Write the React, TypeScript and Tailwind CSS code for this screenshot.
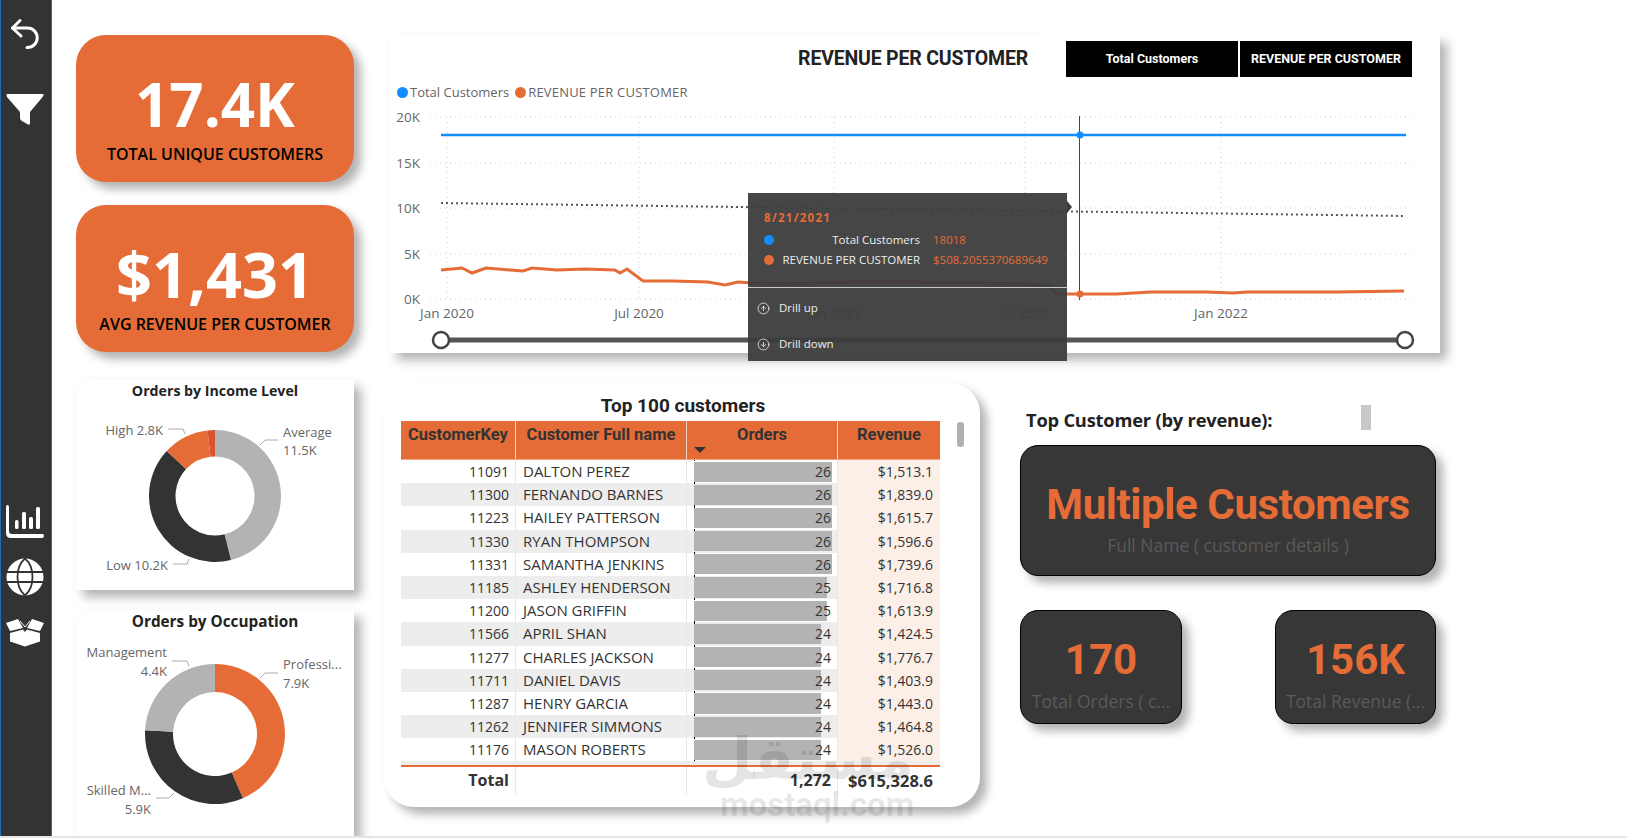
import React from "react";
import { CircleArrowDown, CircleArrowUp } from "lucide-react";

const ORANGE = "#E66C37";
const DARK = "#333333";
const GREY = "#B3B3B3";

const customers = [
  { key: 11091, name: "DALTON PEREZ", orders: 26, revenue: "$1,513.1" },
  { key: 11300, name: "FERNANDO BARNES", orders: 26, revenue: "$1,839.0" },
  { key: 11223, name: "HAILEY PATTERSON", orders: 26, revenue: "$1,615.7" },
  { key: 11330, name: "RYAN THOMPSON", orders: 26, revenue: "$1,596.6" },
  { key: 11331, name: "SAMANTHA JENKINS", orders: 26, revenue: "$1,739.6" },
  { key: 11185, name: "ASHLEY HENDERSON", orders: 25, revenue: "$1,716.8" },
  { key: 11200, name: "JASON GRIFFIN", orders: 25, revenue: "$1,613.9" },
  { key: 11566, name: "APRIL SHAN", orders: 24, revenue: "$1,424.5" },
  { key: 11277, name: "CHARLES JACKSON", orders: 24, revenue: "$1,776.7" },
  { key: 11711, name: "DANIEL DAVIS", orders: 24, revenue: "$1,403.9" },
  { key: 11287, name: "HENRY GARCIA", orders: 24, revenue: "$1,443.0" },
  { key: 11262, name: "JENNIFER SIMMONS", orders: 24, revenue: "$1,464.8" },
  { key: 11176, name: "MASON ROBERTS", orders: 24, revenue: "$1,526.0" },
];

// revenue line, in page pixels (the chart svg uses a matching viewBox)
const revenueLine =
  "441,270 462,268 472,273 486,268 510,270 523,271 532,268 557,270 585,269 615,270 620,273 627,269 643,281 673,281 708,282 725,285 738,282 752,283 790,284 850,282 912,282 980,283 1049,285 1056,294 1080,294 1117,294 1151,292 1206,292 1233,293 1247,292 1336,292 1404,291";

const arc = (cx: number, cy: number, r: number, ri: number, from: number, to: number) => {
  const pt = (rad: number, deg: number) => {
    const a = ((deg - 90) * Math.PI) / 180;
    return `${(cx + rad * Math.cos(a)).toFixed(2)} ${(cy + rad * Math.sin(a)).toFixed(2)}`;
  };
  const large = to - from > 180 ? 1 : 0;
  return `M${pt(r, from)} A${r} ${r} 0 ${large} 1 ${pt(r, to)} L${pt(ri, to)} A${ri} ${ri} 0 ${large} 0 ${pt(ri, from)} Z`;
};

const Sidebar = () => (
  <aside className="w-[52px] h-[836px] shrink-0 bg-[#333333] border-x border-[#1f6fb5] flex flex-col items-center pr-[3px]">
    <svg className="mt-[18px]" width="30" height="32" viewBox="0 0 30 32" fill="none" stroke="#fff" strokeWidth="3" strokeLinecap="round" strokeLinejoin="round">
      <path d="M10 2.500 2.500 10 11 18" />
      <path d="M2.500 10H17.500a9.500 9.500 0 0 1 0 19.500H17" />
    </svg>
    <svg className="mt-[43px]" width="38" height="33" viewBox="0 0 38 33" fill="#fff">
      <path d="M1 1H36.500Q38.500 1 37 3.500L24 19V30Q24 32.500 22 31.500L16 28Q14 27 14 25V19L1 4Q0 2 1 1Z" />
    </svg>
    <svg className="mt-[379px]" width="38" height="34" viewBox="0 0 38 34" fill="#fff">
      <path d="M0 2Q0 0 1.500 0 3 0 3 2V26Q3 29 6 29H36.500Q38 29 38 31 38 33 36 33H5Q0 33 0 28Z" />
      <rect x="9" y="15" width="3.500" height="9" rx="1.500" />
      <rect x="16" y="7" width="4" height="17" rx="1.500" />
      <rect x="23" y="12" width="4" height="12" rx="1.500" />
      <rect x="30" y="2" width="4" height="22" rx="1.500" />
    </svg>
    <svg className="mt-[19px]" width="38" height="38" viewBox="0 0 38 38">
      <circle cx="19" cy="19" r="18.500" fill="#fff" />
      <path d="M0 14h38M0 24h38M19 .5C9 9 9 29 19 37.500M19 .5C29 9 29 29 19 37.500" fill="none" stroke="#333" strokeWidth="1.800" />
    </svg>
    <svg className="mt-[22px]" width="38" height="29" viewBox="0 0 38 29" fill="#fff">
      <path d="M0 5 12 1 17 10 4 13Z" />
      <path d="M38 5 26 1 21 10 34 13Z" />
      <path d="M4 15 17 11.500 19 14 21 11.500 34 15V23.500L19 28.500 4 23.500Z" />
      <path d="M14 3 19 9 24 3" fill="none" stroke="#fff" strokeWidth="1" />
    </svg>
  </aside>
);

const KpiCard = ({ value, label, size }: { value: string; label: string; size: string }) => (
  <div className="h-[147px] rounded-[30px] bg-[#E66C37] shadow-[7px_7px_10px_rgba(0,0,0,0.3)] flex flex-col items-center pt-[29px]">
    <div className={`${size} leading-[80px] font-bold text-white`}>{value}</div>
    <div className="text-[16px] leading-[22px] font-semibold text-black -mt-[1px]">{label}</div>
  </div>
);

const Leader = ({ d }: { d: string }) => <path d={d} fill="none" stroke="#aaa" strokeWidth="1" />;

const IncomeDonut = () => (
  <div className="h-[210px] bg-white shadow-[7px_7px_10px_rgba(0,0,0,0.3)]">
    <div className="h-[22px] text-center text-[14.200px] leading-[22px] font-bold text-[#222]">Orders by Income Level</div>
    <svg className="block" width="278" height="188" viewBox="76 402 278 188">
      <path d={arc(215, 496, 66, 39.5, 0, 166)} fill={GREY} />
      <path d={arc(215, 496, 66, 39.5, 166, 313)} fill={DARK} />
      <path d={arc(215, 496, 66, 39.5, 313, 353.5)} fill={ORANGE} />
      <path d={arc(215, 496, 66, 39.5, 353.5, 360)} fill="#D9532F" />
      <Leader d="M168 429h15l2 5" />
      <Leader d="M260 445l5-5h13" />
      <Leader d="M173 564h14l2-5" />
      <g className="text-[13px] fill-[#666]">
        <text x="163" y="435" textAnchor="end">High 2.8K</text>
        <text x="283" y="437">Average</text>
        <text x="283" y="455">11.5K</text>
        <text x="168" y="570" textAnchor="end">Low 10.2K</text>
      </g>
    </svg>
  </div>
);

const OccupationDonut = () => (
  <div className="h-[226px] mt-[20px] bg-white shadow-[7px_7px_10px_rgba(0,0,0,0.3)]">
    <div className="h-[22px] text-center text-[15.300px] leading-[22px] font-bold text-[#222]">Orders by Occupation</div>
    <svg className="block" width="278" height="204" viewBox="76 632 278 204">
      <path d={arc(215, 734, 70, 42, 0, 156.5)} fill={ORANGE} />
      <path d={arc(215, 734, 70, 42, 156.5, 273)} fill={DARK} />
      <path d={arc(215, 734, 70, 42, 273, 360)} fill={GREY} />
      <Leader d="M172 661h15l2 5" />
      <Leader d="M260 678l5-5h13" />
      <Leader d="M156 798h13l5-5" />
      <g className="text-[13px] fill-[#666]">
        <text x="167" y="657" textAnchor="end">Management</text>
        <text x="167" y="676" textAnchor="end">4.4K</text>
        <text x="283" y="669">Professi...</text>
        <text x="283" y="688">7.9K</text>
        <text x="151" y="795" textAnchor="end">Skilled M...</text>
        <text x="151" y="814" textAnchor="end">5.9K</text>
      </g>
    </svg>
  </div>
);

const RevenueChart = () => (
  <div className="relative ml-[6px] w-[1050px] h-[318px] bg-white shadow-[7px_7px_10px_rgba(0,0,0,0.3)]">
    {/* white strip that cuts across the card top, behind the buttons */}
    <div className="absolute left-[646px] right-0 -top-[2px] h-[4px] bg-white" />
    <div className="relative flex justify-end items-start pt-[6px] pr-[28px]">
      <div className="mr-[38px] mt-[6px] text-[19.500px] leading-[24px] font-bold font-['Roboto',sans-serif] text-[#222] tracking-[-0.2px]">
        REVENUE PER CUSTOMER
      </div>
      <div className="flex gap-[2px]">
        <div className="w-[172px] h-[36px] bg-black text-white text-[12.500px] font-bold font-['Roboto',sans-serif] flex items-center justify-center">Total Customers</div>
        <div className="w-[172px] h-[36px] bg-black text-white text-[12.500px] font-bold font-['Roboto',sans-serif] flex items-center justify-center">REVENUE PER CUSTOMER</div>
      </div>
    </div>
    <div className="h-[16px] mt-[7px] pl-[7px] flex items-center text-[13px] leading-[15px] text-[#666]">
      <span className="w-[11px] h-[11px] rounded-full bg-[#118DFF] mr-[2px]" />
      <span>Total Customers</span>
      <span className="w-[11px] h-[11px] rounded-full bg-[#E66C37] ml-[6px] mr-[2px]" />
      <span className="tracking-[0.2px]">REVENUE PER CUSTOMER</span>
    </div>
    <svg className="block" width="1050" height="253" viewBox="390 100 1050 253">
      <g stroke="#cfcfcf" strokeWidth="1" strokeDasharray="1 4">
        {[117, 163, 208, 254, 299].map((y) => (
          <line key={y} x1="430" x2="1415" y1={y} y2={y} />
        ))}
        {[447, 639, 834, 1025, 1221].map((x) => (
          <line key={x} x1={x} x2={x} y1="117" y2="299" />
        ))}
      </g>
      <g className="text-[13.500px] fill-[#666]" textAnchor="end">
        <text x="420" y="122">20K</text>
        <text x="420" y="168">15K</text>
        <text x="420" y="213">10K</text>
        <text x="420" y="259">5K</text>
        <text x="420" y="304">0K</text>
      </g>
      <g className="text-[13.500px] fill-[#666]" textAnchor="middle">
        <text x="447" y="318">Jan 2020</text>
        <text x="639" y="318">Jul 2020</text>
        <text x="834" y="318">Jan 2021</text>
        <text x="1025" y="318">Jul 2021</text>
        <text x="1221" y="318">Jan 2022</text>
      </g>
      <line x1="441" x2="1406" y1="135" y2="135" stroke="#118DFF" strokeWidth="2.500" />
      <line x1="441" x2="1406" y1="203" y2="216" stroke="#555" strokeWidth="2" strokeDasharray="2 3" />
      <polyline points={revenueLine} fill="none" stroke={ORANGE} strokeWidth="3" />
      <line x1="1079.500" x2="1079.500" y1="116" y2="300" stroke="#444" strokeWidth="1" />
      <circle cx="1080" cy="135" r="3.500" fill="#118DFF" />
      <circle cx="1080" cy="294" r="3.500" fill={ORANGE} />
      <line x1="441" x2="1405" y1="340" y2="340" stroke="#555" strokeWidth="5" />
      <circle cx="441" cy="340" r="8" fill="#fff" stroke="#444" strokeWidth="2.500" />
      <circle cx="1405" cy="340" r="8" fill="#fff" stroke="#444" strokeWidth="2.500" />
    </svg>

    {/* hover tooltip */}
    <div className="absolute left-[358px] top-[158px] w-[319px] h-[168px] bg-[#3C3C3C]/95 text-[11.500px] text-[#eee]">
      <div className="absolute -right-[5px] top-[8px] w-0 h-0 border-y-[6px] border-y-transparent border-l-[5px] border-l-[#3C3C3C]" />
      <div className="h-[95px] border-b border-[#c8c8c8] pl-[16px] pt-[17px]">
        <div className="h-[16px] leading-[16px] font-bold text-[#E66C37] tracking-[1.300px]">8/21/2021</div>
        <div className="mt-[4px] flex items-center h-[20px]">
          <span className="w-[10px] h-[10px] rounded-full bg-[#118DFF]" />
          <span className="w-[146px] text-right">Total Customers</span>
          <span className="ml-[13px] text-[#E66C37]">18018</span>
        </div>
        <div className="flex items-center h-[20px]">
          <span className="w-[10px] h-[10px] rounded-full bg-[#E66C37]" />
          <span className="w-[146px] text-right whitespace-nowrap">REVENUE PER CUSTOMER</span>
          <span className="ml-[13px] text-[#E66C37]">$508.2055370689649</span>
        </div>
      </div>
      <div className="mt-[11px] h-[18px] pl-[9px] flex items-center gap-[9px]">
        <CircleArrowUp size={13} strokeWidth={1.5} />
        <span>Drill up</span>
      </div>
      <div className="mt-[18px] h-[18px] pl-[9px] flex items-center gap-[9px]">
        <CircleArrowDown size={13} strokeWidth={1.5} />
        <span>Drill down</span>
      </div>
    </div>
  </div>
);

const CustomerTable = () => (
  <div className="relative w-[596px] h-[424px] rounded-[30px] bg-white shadow-[7px_7px_10px_rgba(0,0,0,0.3)] pl-[17px]">
    <div className="absolute left-[573px] top-[39px] w-[7px] h-[25px] rounded-[3px] bg-[#b0b0b0]" />
    <div className="w-[539px] h-[38px] pl-[25px] text-center text-[19px] leading-[46px] font-bold font-['Roboto',sans-serif] text-[#222]">
      Top 100 customers
    </div>
    <div className="w-[539px] h-[39px] grid grid-cols-[115px_171px_151px_102px] bg-[#E66C37] border-b border-[#f2a781] text-[16.500px] font-bold font-['Roboto',sans-serif] text-[#333] text-center leading-[27px]">
      <div className="border-r border-[#f3d3c3]">CustomerKey</div>
      <div className="border-r border-[#f3d3c3] whitespace-nowrap">Customer Full name</div>
      <div className="relative border-r border-[#f3d3c3]">
        Orders
        <span className="absolute left-[7px] top-[26px] w-0 h-0 border-x-[6px] border-x-transparent border-t-[6px] border-t-[#333]" />
      </div>
      <div>Revenue</div>
    </div>
    {customers.map((c, i) => (
      <div
        key={c.key}
        className={`w-[539px] h-[23.200px] grid grid-cols-[115px_171px_151px_102px] text-[14px] leading-[23px] text-[#333] ${
          i % 2 === 0 ? "bg-white" : "bg-[#ededed]"
        }`}
      >
        <div className="text-right pr-[6px] border-r border-[#e8e8e8]">{c.key}</div>
        <div className="pl-[7px] text-[15px] border-r border-[#e8e8e8] whitespace-nowrap">{c.name}</div>
        <div className="relative pr-[6px] text-right border-r border-[#e8e8e8]">
          <div className="absolute left-[7px] top-0 bottom-0 border-l border-dotted border-black" />
          <div className="absolute left-[7px] top-[1.500px] bottom-[1.500px] bg-[#b3b3b3]" style={{ width: (c.orders / 26) * 138 }} />
          <span className="relative">{c.orders}</span>
        </div>
        <div className="bg-[#fcefe8] text-right pr-[7px]">{c.revenue}</div>
      </div>
    ))}
    <div className="w-[539px] h-[5.500px] bg-[#ededed] border-b-2 border-[#E66C37]" />
    <div className="w-[539px] h-[25px] grid grid-cols-[115px_171px_151px_102px] text-[16px] leading-[27px] font-bold text-[#333]">
      <div className="text-right pr-[6px] border-r border-[#e8e8e8]">Total</div>
      <div className="border-r border-[#e8e8e8]" />
      <div className="text-right pr-[6px] border-r border-[#e8e8e8]">1,272</div>
      <div className="text-right pr-[7px] whitespace-nowrap text-[16.500px]">$615,328.6</div>
    </div>
  </div>
);

const DarkCard = ({ value, label, width }: { value: string; label: string; width: string }) => (
  <div className={`${width} h-[114px] rounded-[18px] bg-[#373737] border border-black shadow-[7px_7px_10px_rgba(0,0,0,0.3)] flex flex-col items-center overflow-hidden`}>
    <div className="mt-[25px] text-[42px] leading-[48px] font-bold font-['Roboto',sans-serif] text-[#E66C37]">{value}</div>
    <div className="mt-[5px] text-[17.500px] leading-[24px] text-[#5a5a5a] whitespace-nowrap">{label}</div>
  </div>
);

const TopCustomer = () => (
  <div className="ml-[40px] w-[416px]">
    <div className="mt-[22px] h-[25px] pt-[4px] flex items-center relative">
      <div className="ml-[6px] text-[18.300px] font-bold text-[#222] tracking-[-0.2px]">Top Customer (by revenue):</div>
      <div className="absolute left-[341px] top-0 w-[10px] h-[25px] bg-[#c8c8c8]" />
    </div>
    <div className="mt-[15px] h-[131px] rounded-[18px] bg-[#373737] border border-black shadow-[7px_7px_10px_rgba(0,0,0,0.3)] flex flex-col items-center">
      <div className="mt-[34px] text-[42px] leading-[50px] font-bold font-['Roboto',sans-serif] text-[#E66C37] tracking-[-0.4px]">Multiple Customers</div>
      <div className="mt-[3px] text-[17.500px] leading-[24px] text-[#5a5a5a]">Full Name ( customer details )</div>
    </div>
    <div className="mt-[34px] flex justify-between">
      <DarkCard width="w-[162px]" value="170" label="Total Orders ( c..." />
      <DarkCard width="w-[161px]" value="156K" label="Total Revenue (..." />
    </div>
  </div>
);

export default function App() {
  return (
    <div className="relative w-[1627px] h-[838px] bg-white overflow-hidden flex border-b-2 border-[#e5e5e5] font-['Open_Sans',sans-serif]">
      <Sidebar />
      <div className="ml-[24px] w-[278px] shrink-0 pt-[35px] flex flex-col">
        <KpiCard size="text-[60px]" value="17.4K" label="TOTAL UNIQUE CUSTOMERS" />
        <div className="h-[23px]" />
        <KpiCard size="text-[63px]" value="$1,431" label="AVG REVENUE PER CUSTOMER" />
        <div className="h-[28px]" />
        <IncomeDonut />
        <OccupationDonut />
      </div>
      <div className="ml-[30px] pt-[35px]">
        <RevenueChart />
        <div className="mt-[30px] flex">
          <CustomerTable />
          <TopCustomer />
        </div>
      </div>

      {/* watermark */}
      <div className="absolute left-[720px] top-[728px] w-[194px] text-center text-black/10 pointer-events-none">
        <div dir="rtl" className="text-[58px] leading-[62px] font-bold font-['DejaVu_Sans',sans-serif]">مستقل</div>
        <div className="text-[33px] leading-[30px] font-bold font-['Roboto',sans-serif] whitespace-nowrap">mostaql.com</div>
      </div>
    </div>
  );
}
